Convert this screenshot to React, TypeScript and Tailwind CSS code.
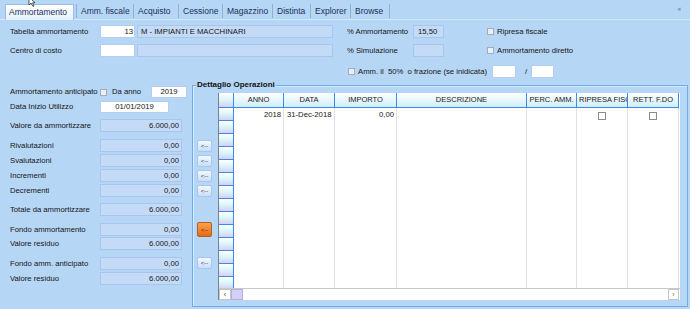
import React from "react";

const font = { fontFamily: '"Liberation Sans", Arial, sans-serif' };

const tabs = [
  { label: "Amm. fiscale", w: "w-[57px]" },
  { label: "Acquisto", w: "w-[45px]" },
  { label: "Cessione", w: "w-[44px]" },
  { label: "Magazzino", w: "w-[50px]" },
  { label: "Distinta", w: "w-[38px]" },
  { label: "Explorer", w: "w-[40px]" },
  { label: "Browse", w: "w-[39px]" },
];

const columns = [
  { label: "ANNO", w: "w-[50px]" },
  { label: "DATA", w: "w-[51px]" },
  { label: "IMPORTO", w: "w-[62px]" },
  { label: "DESCRIZIONE", w: "w-[130px]" },
  { label: "PERC. AMM.", w: "w-[50px]" },
  { label: "RIPRESA FISCALE", w: "w-[51px]" },
  { label: "RETT. F.DO", w: "w-[51px]" },
];

const Check = ({ className = "" }: { className?: string }) => (
  <span className={`inline-block w-[7px] h-[7px] border border-[#a4acbc] bg-[#e9eef7] shrink-0 ${className}`} />
);

// read-only light blue field
const Field = ({ value = "", className = "" }: { value?: string; className?: string }) => (
  <div className={`h-[13px] bg-[#c4dbf7] border border-[#a9c4ee] flex items-center justify-end pr-[2px] ${className}`}>
    {value}
  </div>
);

const Input = ({ value = "", className = "" }: { value?: string; className?: string }) => (
  <div className={`h-[13px] bg-white border border-[#b4cdf0] flex items-center ${className}`}>{value}</div>
);

const Arrow = ({ className = "" }: { className?: string }) => (
  <div
    className={`w-[15px] h-[12px] rounded-[2px] border border-[#a9c6ec] bg-gradient-to-b from-[#f4f9ff] to-[#c7defa] flex items-center justify-center text-[6px] text-[#334] leading-none ${className}`}
  >
    &lt;--
  </div>
);

const Row = ({ label, children, className = "" }: { label: string; children: React.ReactNode; className?: string }) => (
  <div className={`flex items-center ${className}`}>
    <span className="w-[100px] pl-[10px] whitespace-nowrap">{label}</span>
    {children}
  </div>
);

export default function App() {
  const bodyRows = Array.from({ length: 14 });

  return (
    <div style={font} className="relative w-[690px] h-[309px] bg-[#b6d6f6] text-[7.7px] text-[#151515] overflow-hidden">
      {/* tab strip */}
      <div className="h-[20px] flex items-end pl-[5px] border-b border-[#d4e8fd] text-[8.5px] text-[#1d2f5c]">
        <div className="w-[69px] h-[16px] mb-[-1px] bg-gradient-to-b from-white to-[#e4f1fe] border border-b-0 border-[#9fbde3] flex items-center pl-[3px]">
          Ammortamento
        </div>
        <div className="w-[2px]" />
        {tabs.map((t) => (
          <div key={t.label} className={`${t.w} h-[14px] mb-[1px] border-l border-[#8fb0d8] flex items-center pl-[4px]`}>
            {t.label}
          </div>
        ))}
        <div className="h-[14px] mb-[1px] border-l border-[#8fb0d8]" />
        <div className="flex-1" />
        <div className="self-center pr-[9px] text-[7px] text-[#8a9ab0]">◂</div>
      </div>

      {/* row 1 */}
      <div className="flex items-center h-[13px] mt-[5px]">
        <span className="w-[100px] pl-[10px] whitespace-nowrap">Tabella ammortamento</span>
        <Input value="13" className="w-[35px] justify-end pr-[1px]" />
        <div className="ml-[2px] w-[196px] h-[13px] bg-[#c4dbf7] border border-[#a9c4ee] flex items-center pl-[3px]">
          M - IMPIANTI E MACCHINARI
        </div>
        <span className="ml-[14px] w-[66px] whitespace-nowrap">% Ammortamento</span>
        <div className="w-[31px] h-[13px] bg-[#c4dbf7] border border-[#a9c4ee] flex items-center pl-[4px]">15,50</div>
        <Check className="ml-[43px]" />
        <span className="ml-[3px]">Ripresa fiscale</span>
      </div>

      {/* row 2 */}
      <div className="flex items-center h-[13px] mt-[6px]">
        <span className="w-[100px] pl-[10px] whitespace-nowrap">Centro di costo</span>
        <Input className="w-[35px]" />
        <div className="ml-[2px] w-[196px] h-[13px] bg-[#c4dbf7] border border-[#a9c4ee]" />
        <span className="ml-[14px] w-[66px] whitespace-nowrap">% Simulazione</span>
        <div className="w-[31px] h-[13px] bg-[#c4dbf7] border border-[#a9c4ee]" />
        <Check className="ml-[43px]" />
        <span className="ml-[3px]">Ammortamento diretto</span>
      </div>

      {/* row 3 */}
      <div className="flex items-center h-[13px] mt-[8px] pl-[348px]">
        <Check />
        <span className="ml-[3px] whitespace-nowrap">Amm. il&nbsp; 50%&nbsp; o frazione (se inidicata)</span>
        <div className="ml-[5px] w-[24px] h-[13px] bg-white border border-[#b4cdf0]" />
        <span className="ml-[9px]">/</span>
        <div className="ml-[4px] w-[23px] h-[13px] bg-white border border-[#b4cdf0]" />
      </div>

      {/* bottom block */}
      <div className="flex mt-[7px]">
        <div className="w-[192px] flex flex-col">
          <Row label="Ammortamento anticipato" className="h-[12px] mt-[1px]">
            <Check />
            <span className="ml-[5px]">Da anno</span>
            <div className="ml-[10px] w-[36px] h-[12px] bg-white border border-[#b4cdf0] flex items-center justify-center">2019</div>
          </Row>
          <Row label="Data Inizio Utilizzo" className="h-[12px] mt-[3px]">
            <div className="w-[69px] h-[12px] bg-white border border-[#b4cdf0] flex items-center justify-center">01/01/2019</div>
          </Row>
          <Row label="Valore da ammortizzare" className="mt-[6px]">
            <Field value="6.000,00" className="w-[82px]" />
          </Row>
          <Row label="Rivalutazioni" className="mt-[7px]">
            <Field value="0,00" className="w-[82px]" />
          </Row>
          <Row label="Svalutazioni" className="mt-[2px]">
            <Field value="0,00" className="w-[82px]" />
          </Row>
          <Row label="Incrementi" className="mt-[2px]">
            <Field value="0,00" className="w-[82px]" />
          </Row>
          <Row label="Decrementi" className="mt-[2px]">
            <Field value="0,00" className="w-[82px]" />
          </Row>
          <Row label="Totale da ammortizzare" className="mt-[6px]">
            <Field value="6.000,00" className="w-[82px]" />
          </Row>
          <Row label="Fondo ammortamento" className="mt-[7px]">
            <Field value="0,00" className="w-[82px]" />
          </Row>
          <Row label="Valore residuo" className="mt-[1px]">
            <Field value="6.000,00" className="w-[82px]" />
          </Row>
          <Row label="Fondo amm. anticipato" className="mt-[7px]">
            <Field value="0,00" className="w-[82px]" />
          </Row>
          <Row label="Valore residuo" className="mt-[2px]">
            <Field value="6.000,00" className="w-[82px]" />
          </Row>
        </div>

        {/* Dettaglio Operazioni group */}
        <div className="relative w-[496px] h-[222px] border border-[#70a9ec] shadow-[inset_1px_1px_0_#d6eafe] flex pt-[7px] pl-[4px]">
          <span className="absolute left-[3px] top-[-6px] px-[1px] bg-[#b6d6f6] font-bold text-[8px] leading-[10px] text-[#111]">
            Dettaglio Operazioni
          </span>

          <div className="w-[15px] flex flex-col">
            <Arrow className="mt-[47px]" />
            <Arrow className="mt-[3px]" />
            <Arrow className="mt-[3px]" />
            <Arrow className="mt-[3px]" />
            <div className="mt-[25px] w-[15px] h-[15px] rounded-[2px] border border-[#a8642a] bg-gradient-to-b from-[#fba24a] to-[#e8680e] flex items-center justify-center text-[6px] text-[#3a1a00] leading-none">
              &lt;--
            </div>
            <Arrow className="mt-[20px]" />
          </div>

          {/* grid */}
          <div className="ml-[6px] w-[462px] h-[207px] bg-white border-l border-[#7d8088] flex flex-col overflow-hidden">
            <div className="flex flex-1 min-h-0 overflow-hidden">
              <div className="w-[15px] flex flex-col border-r border-[#3f8ae6]">
                <div className="h-[15px] shrink-0 border-b border-[#3f8ae6] bg-gradient-to-b from-white via-[#dcf6fb] to-[#d5d0f4]" />
                {bodyRows.map((_, i) => (
                  <div
                    key={i}
                    className="h-[13px] shrink-0 border-b border-[#3f8ae6] bg-gradient-to-b from-white via-[#d8f5fa] to-[#d6cff3]"
                  />
                ))}
              </div>
              {columns.map((c, ci) => (
                <div key={c.label} className={`${c.w} shrink-0 flex flex-col border-r border-[#e0e0e0]`}>
                  <div
                    className={`h-[15px] shrink-0 border-b border-r border-[#3f8ae6] mr-[-1px] bg-gradient-to-b from-white to-[#cdeef8] flex items-center overflow-hidden whitespace-nowrap text-[7.5px] text-[#222] ${
                      ci === 5 ? "justify-start pl-[2px]" : "justify-center"
                    }`}
                  >
                    {c.label}
                  </div>
                  <div className="h-[13px] flex items-center">
                    {ci === 0 && <span className="ml-auto pr-[2px]">2018</span>}
                    {ci === 1 && <span className="pl-[3px]">31-Dec-2018</span>}
                    {ci === 2 && <span className="ml-auto pr-[2px]">0,00</span>}
                    {(ci === 5 || ci === 6) && (
                      <span className="mx-auto mt-[2px] w-[8px] h-[8px] border border-[#8a8a8a] bg-white" />
                    )}
                  </div>
                </div>
              ))}
            </div>
            {/* horizontal scrollbar */}
            <div className="h-[12px] shrink-0 flex border-t border-[#c8c8c8] bg-white">
              <div className="w-[12px] border border-[#c4c4c4] flex items-center justify-center text-[7px] text-[#333] leading-none">‹</div>
              <div className="w-[12px] bg-[#d3d0f7] border border-[#b3aee6]" />
              <div className="flex-1" />
              <div className="w-[11px] border border-[#c4c4c4] flex items-center justify-center text-[7px] text-[#666] leading-none">›</div>
              <div className="w-[1px]" />
            </div>
          </div>
        </div>
      </div>

      {/* mouse pointer */}
      <svg className="absolute left-[28px] top-[-3px]" width="8" height="10" viewBox="0 0 8 10">
        <path d="M1 0 L1 8 L3 6 L5 9.5 L6 9 L4.5 5.8 L7 5.8 Z" fill="#fff" stroke="#333" strokeWidth="0.8" />
      </svg>
    </div>
  );
}
